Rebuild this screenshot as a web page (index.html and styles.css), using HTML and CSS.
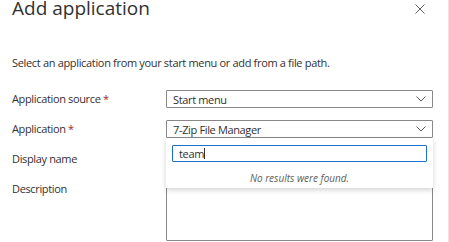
FILE: index.html
```html
<!DOCTYPE html>
<html lang="en">
<head>
  <meta charset="UTF-8" />
  <title>Add application</title>
  <link rel="stylesheet" href="styles.css">
</head>
<body>

<div class="panel">
  <header class="panel-header">
    <h1>Add application</h1>
    <button class="close" aria-label="Close">
      <svg width="10" height="10" viewBox="0 0 10 10"><path d="M0.5 0.5 L9.5 9.5 M9.5 0.5 L0.5 9.5" stroke="#605e5c" stroke-width="1" fill="none"/></svg>
    </button>
  </header>

  <p class="intro">Select an application from your start menu or add from a file path.</p>

  <div class="form">
    <label>Application source <span class="req">*</span></label>
    <div class="select">
      <span>Start menu</span>
      <svg class="chev" width="10" height="6" viewBox="0 0 10 6"><path d="M0.5 0.5 L5 5 L9.5 0.5" stroke="#605e5c" fill="none"/></svg>
    </div>

    <label>Application <span class="req">*</span></label>
    <div class="field-wrap">
      <div class="select">
        <span>7-Zip File Manager</span>
        <svg class="chev" width="10" height="6" viewBox="0 0 10 6"><path d="M0.5 0.5 L5 5 L9.5 0.5" stroke="#605e5c" fill="none"/></svg>
      </div>
      <!-- dropdown menu over the next rows -->
      <div class="dropdown">
        <div class="search">team<span class="caret"></span></div>
        <div class="empty">No results were found.</div>
      </div>
    </div>

    <label>Display name</label>
    <div class="input"></div>

    <label>Description</label>
    <div class="textarea"></div>
  </div>
</div>

</body>
</html>
```

FILE: styles.css
```css
* { box-sizing: border-box; }

body {
  margin: 0;
  font-family: 'Open Sans', 'Noto Sans', sans-serif;
  color: #323130;
  background: #fff;
}

.panel {
  height: 242px;
  padding: 0 0 0 12px;
  border-right: 1px solid #e6e6e6;
  overflow: hidden;
}

.panel-header {
  display: flex;
  justify-content: space-between;
  align-items: flex-start;
  height: 21px;
  padding-right: 23px;
}

h1 {
  margin: 0;
  font-size: 19px;
  font-weight: 400;
  line-height: 16px;
}

.close {
  border: none;
  background: none;
  padding: 0;
  margin-top: 4px;
  width: 10px;
  height: 10px;
  display: flex;
}

.intro {
  font-size: 11px;
  letter-spacing: -0.33px;
  margin: 35px 0 20px;
  line-height: 14px;
}

.form {
  display: grid;
  grid-template-columns: 154px 267px;
  row-gap: 12px;
  font-size: 11px;
  letter-spacing: -0.35px;
}

.form label {
  line-height: 18px;
}

.req { color: #a4262c; }

.field-wrap { position: relative; }

.select, .input {
  height: 18px;
  border: 1px solid #8a8886;
  border-radius: 1px;
  display: flex;
  align-items: center;
  justify-content: space-between;
  padding: 0 6px 0 6px;
}

.chev { display: block; }

.textarea {
  height: 61px;
  border: 1px solid #8a8886;
  border-radius: 1px;
}

.dropdown {
  position: absolute;
  top: 18px;
  left: 0;
  width: 267px;
  height: 50px;
  background: #fff;
  box-shadow: 0 2px 5px rgba(0, 0, 0, 0.18);
  padding: 7px 6px 0;
  z-index: 2;
}

.search {
  height: 17px;
  border: 1px solid #1a6fd1;
  border-radius: 1px;
  padding: 0 6px;
  line-height: 15px;
  display: flex;
  align-items: center;
}

.caret {
  display: inline-block;
  width: 1px;
  height: 11px;
  background: #323130;
}

.empty {
  text-align: center;
  font-style: italic;
  color: #605e5c;
  font-size: 10px;
  letter-spacing: 0;
  margin-top: 9px;
}
```
